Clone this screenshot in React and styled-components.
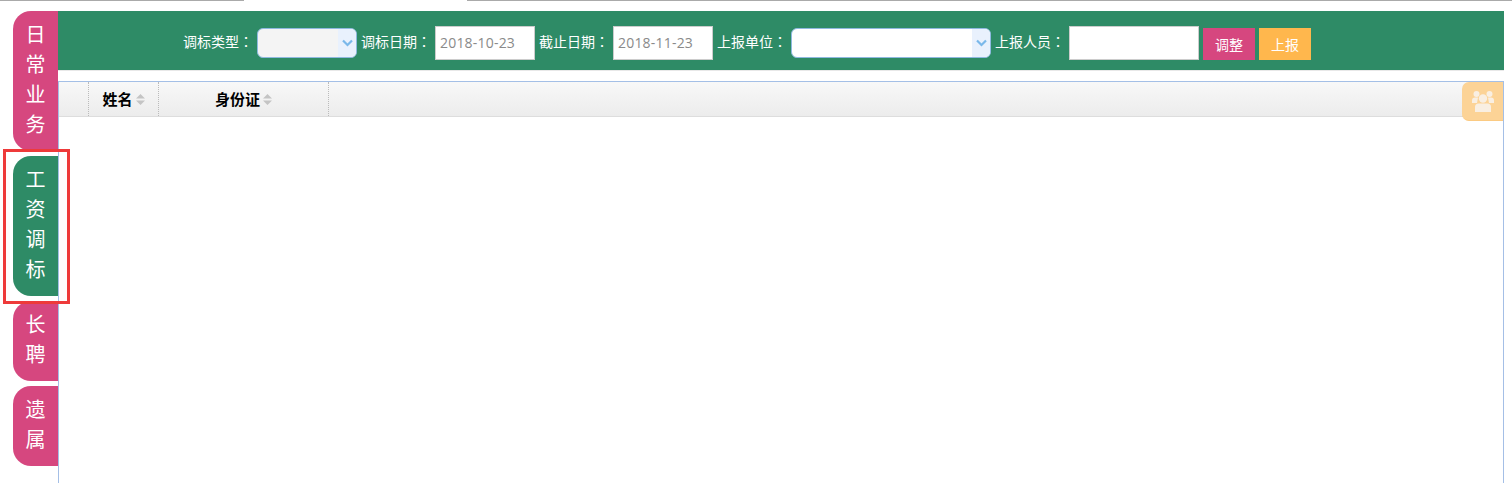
import React from 'react';
import styled, { createGlobalStyle } from 'styled-components';

const Global = createGlobalStyle`
  html, body { margin: 0; padding: 0; background: #fff; }
  body { font-family: "Noto Sans CJK SC", "Open Sans", sans-serif; overflow: hidden; }
`;
const Page = styled.div`
  position: relative;
  display: flex;
  width: 1512px;
  height: 483px;
  overflow: hidden;
  box-sizing: border-box;
`;
const TopEdge = styled.div`
  position: absolute;
  top: 0;
  left: 0;
  width: 100%;
  height: 1px;
  background: linear-gradient(to right, #aaa 0 244px, #fff 244px 467px, #aaa 467px 100%);
`;
const Tabs = styled.nav`
  flex: 0 0 45px;
  margin-left: 13px;
  padding-top: 11px;
  display: flex;
  flex-direction: column;
  gap: 5px;
`;
const Tab = styled.div`
  width: 45px;
  height: ${p => p.$h}px;
  box-sizing: border-box;
  padding-top: 8px;
  background: ${p => (p.$active ? '#2e8b66' : '#d6477f')};
  border-radius: 18px 0 0 18px;
  color: #fff;
  font-size: 20px;
  line-height: 30px;
  text-align: center;
`;
const Highlight = styled.div`
  position: absolute;
  left: 3px;
  top: 149px;
  width: 67px;
  height: 155px;
  box-sizing: border-box;
  border: 3px solid #ee3a3a;
`;
const Main = styled.main`
  flex: 0 0 1446px;
  padding-top: 11px;
  display: flex;
  flex-direction: column;
`;
const Toolbar = styled.div`
  height: 59px;
  box-sizing: border-box;
  background: #2e8b66;
  display: flex;
  align-items: center;
  justify-content: center;
  padding: 5px 68px 0 0;
  color: #fff;
  font-size: 14px;
`;
const Divider = styled.div`
  height: 1px;
  background: #e8e8e8;
`;
const Label = styled.span`
  white-space: nowrap;
  margin: 0 4px 0 ${p => p.$ml || 0}px;
  line-height: 18px;
  position: relative;
  top: -2px;
`;
const Colon = styled.span`
  font-family: "Noto Sans CJK TC", sans-serif;
`;
const SelectBox = styled.div`
  width: ${p => p.$w}px;
  height: 30px;
  box-sizing: border-box;
  background: ${p => p.$bg};
  border: 1px solid #8fb9e0;
  border-radius: 6px;
  display: flex;
  justify-content: flex-end;
  overflow: hidden;
`;
const Arrow = styled.span`
  width: 18px;
  background: #e9f1fd;
  display: flex;
  align-items: center;
  justify-content: center;
  svg { display: block; }
`;
const TextBox = styled.div`
  width: ${p => p.$w}px;
  height: 34px;
  box-sizing: border-box;
  background: #fff;
  border: 1px solid #ccc;
  padding-left: 4px;
  color: #8a8a8a;
  font-family: "Open Sans", sans-serif;
  font-size: 14px;
  letter-spacing: 0.2px;
  line-height: 32px;
`;
const Button = styled.div`
  width: 52px;
  height: 32px;
  background: ${p => p.$bg};
  margin: 2px 0 0 ${p => p.$ml}px;
  color: #fff;
  font-size: 14px;
  line-height: 32px;
  text-align: center;
`;
const Grid = styled.section`
  position: relative;
  margin-top: 10px;
  flex: 1;
  border: 1px solid #a4bfe6;
  border-bottom: 0;
  box-sizing: border-box;
`;
const Header = styled.div`
  height: 35px;
  box-sizing: border-box;
  display: flex;
  background: linear-gradient(to bottom, #f8f8f8, #ececec);
  border-bottom: 1px solid #ddd;
`;
const Cell = styled.div`
  flex: 0 0 ${p => p.$w}px;
  box-sizing: border-box;
  border-right: 1px dotted #bbb;
  padding-bottom: 2px;
  display: flex;
  align-items: center;
  justify-content: center;
  gap: 3px;
  color: #000;
  font-size: 15px;
  font-weight: 700;
`;
const Sort = styled.svg`
  display: block;
  margin-top: 2px;
`;
const Badge = styled.div`
  position: absolute;
  top: 0;
  right: 0;
  width: 41px;
  height: 39px;
  box-sizing: border-box;
  background: #fcd396;
  border-bottom: 1px solid #fbca82;
  border-radius: 7px 0 0 7px;
  display: flex;
  align-items: center;
  justify-content: center;
`;

const Chevron = () => (
  <svg width="11" height="8" viewBox="0 0 11 8">
    <path d="M1 1.5 L5.5 6 L10 1.5" fill="none" stroke="#7ab8ea" strokeWidth="2.2" />
  </svg>
);
const SortIcon = () => (
  <Sort width="9" height="11" viewBox="0 0 9 11">
    <path d="M4.5 0 L9 4.5 H0 Z M0 6.5 H9 L4.5 11 Z" fill="#c4c4c4" />
  </Sort>
);
const Users = () => (
  <svg width="22" height="21" viewBox="0 0 22 21">
    <g fill="#f9efe2">
      <circle cx="4.5" cy="3" r="3" />
      <circle cx="17.5" cy="3" r="3" />
      <path d="M0 12 V9.5 Q0 6.5 3 6.5 H6 L5 12 Z" />
      <path d="M22 12 V9.5 Q22 6.5 19 6.5 H16 L17 12 Z" />
      <circle cx="11" cy="7.5" r="4.2" />
      <path d="M3 21 V16 Q3 12.5 6.5 12.5 H15.5 Q19 12.5 19 16 V21 Z" />
    </g>
  </svg>
);

const Field = ({ children, ml }) => (
  <Label $ml={ml}>{children}<Colon>：</Colon></Label>
);

export default function App() {
  return (
    <Page>
      <Global />
      <TopEdge />
      <Tabs>
        <Tab $h={140}>日<br />常<br />业<br />务</Tab>
        <Tab $h={140} $active>工<br />资<br />调<br />标</Tab>
        <Tab $h={80}>长<br />聘</Tab>
        <Tab $h={80}>遗<br />属</Tab>
      </Tabs>
      <Main>
        <Toolbar>
          <Field>调标类型</Field>
          <SelectBox $w={100} $bg="#f4f4f4"><Arrow><Chevron /></Arrow></SelectBox>
          <Field ml={4}>调标日期</Field>
          <TextBox $w={100}>2018-10-23</TextBox>
          <Field ml={4}>截止日期</Field>
          <TextBox $w={100}>2018-11-23</TextBox>
          <Field ml={4}>上报单位</Field>
          <SelectBox $w={200} $bg="#fff"><Arrow><Chevron /></Arrow></SelectBox>
          <Field ml={4}>上报人员</Field>
          <TextBox $w={130} />
          <Button $bg="#d6477f" $ml={4}>调整</Button>
          <Button $bg="#ffb74d" $ml={4}>上报</Button>
        </Toolbar>
        <Divider />
        <Grid>
          <Header>
            <Cell $w={30} />
            <Cell $w={70}>姓名<SortIcon /></Cell>
            <Cell $w={170}>身份证<SortIcon /></Cell>
          </Header>
          <Badge><Users /></Badge>
        </Grid>
      </Main>
      <Highlight />
    </Page>
  );
}
